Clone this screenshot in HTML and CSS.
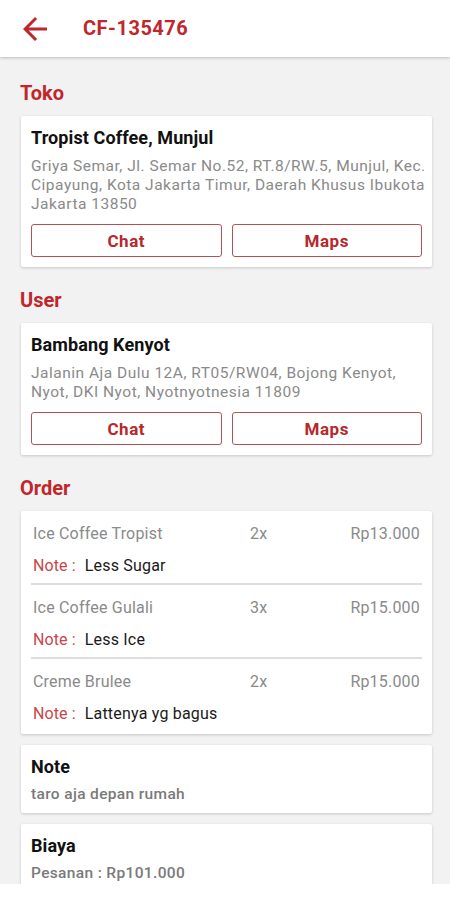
FILE: index.html
```html
<!DOCTYPE html>
<html lang="id">
<head>
<meta charset="utf-8">
<title>CF-135476</title>
<link rel="stylesheet" href="styles.css">
</head>
<body>
<header class="appbar">
  <button class="back" aria-label="Kembali">
    <svg viewBox="0 0 24 24" width="36" height="36"><path d="M20 11H7.83l5.59-5.59L12 4l-8 8 8 8 1.41-1.41L7.83 13H20v-2z" fill="currentColor"/></svg>
  </button>
  <h1 class="title">CF-135476</h1>
</header>

<main class="content">
  <h2 class="section-title">Toko</h2>
  <section class="card party">
    <h3 class="card-title">Tropist Coffee, Munjul</h3>
    <p class="address">Griya Semar, Jl. Semar No.52, RT.8/RW.5, Munjul, Kec. Cipayung, Kota Jakarta Timur, Daerah Khusus Ibukota Jakarta 13850</p>
    <div class="actions">
      <button class="btn">Chat</button>
      <button class="btn">Maps</button>
    </div>
  </section>

  <h2 class="section-title">User</h2>
  <section class="card party">
    <h3 class="card-title">Bambang Kenyot</h3>
    <p class="address">Jalanin Aja Dulu 12A, RT05/RW04, Bojong Kenyot, Nyot, DKI Nyot, Nyotnyotnesia 11809</p>
    <div class="actions">
      <button class="btn">Chat</button>
      <button class="btn">Maps</button>
    </div>
  </section>

  <h2 class="section-title">Order</h2>
  <section class="card order">
    <div class="order-row">
      <div class="item"><span class="name">Ice Coffee Tropist</span><span class="qty">2x</span><span class="price">Rp13.000</span></div>
      <div class="note"><span class="note-label">Note :</span><span class="note-value">Less Sugar</span></div>
    </div>
    <div class="order-row">
      <div class="item"><span class="name">Ice Coffee Gulali</span><span class="qty">3x</span><span class="price">Rp15.000</span></div>
      <div class="note"><span class="note-label">Note :</span><span class="note-value">Less Ice</span></div>
    </div>
    <div class="order-row">
      <div class="item"><span class="name">Creme Brulee</span><span class="qty">2x</span><span class="price">Rp15.000</span></div>
      <div class="note"><span class="note-label">Note :</span><span class="note-value">Lattenya yg bagus</span></div>
    </div>
  </section>

  <section class="card info">
    <h3 class="card-title">Note</h3>
    <p class="info-text">taro aja depan rumah</p>
  </section>

  <section class="card info">
    <h3 class="card-title">Biaya</h3>
    <p class="info-text">Pesanan : Rp101.000</p>
  </section>
</main>
<div class="bottom-bar"></div>
</body>
</html>
```

FILE: styles.css
```css
* { box-sizing: border-box; }
html, body { margin: 0; padding: 0; }
body {
  background: #f2f2f2;
  font-family: Roboto, "Noto Sans", "Liberation Sans", sans-serif;
  color: #222;
  width: 450px;
  min-height: 900px;
}
.appbar {
  height: 57px;
  background: #fff;
  display: flex;
  align-items: center;
  box-shadow: 0 1px 3px rgba(0,0,0,0.22);
  position: relative;
  z-index: 1;
}
.back {
  border: 0;
  background: none;
  padding: 0;
  margin: 0 0 0 17px;
  width: 36px;
  height: 36px;
  color: #c0272d;
  display: flex;
}
.title {
  margin: 0 0 0 30px;
  font-size: 20px;
  letter-spacing: 0.5px;
  font-weight: 700;
  color: #c0272d;
  line-height: 57px;
}
.content {
  padding: 3px 18px 40px 21px;
}
.section-title {
  margin: 21px 0 11px -1px;
  font-size: 20px;
  line-height: 24px;
  font-weight: 700;
  color: #c0272d;
}
.card {
  background: #fff;
  border-radius: 2px;
  box-shadow: 0 1px 3px rgba(0,0,0,0.18);
}
.party { padding: 12px 10px 10px; }
.card-title {
  margin: 0;
  font-size: 18px;
  letter-spacing: 0.1px;
  line-height: 20px;
  font-weight: 700;
  color: #111;
}
.address {
  margin: 9px -4px 0 0;
  font-size: 15.5px;
  letter-spacing: 0.5px;
  line-height: 19px;
  color: #8a8a8a;
}
.actions {
  margin-top: 10px;
  display: grid;
  grid-template-columns: 1fr 1fr;
  gap: 10px;
}
.btn {
  height: 33px;
  background: #fff;
  border: 1px solid #b35252;
  border-radius: 3px;
  font-family: inherit;
  font-size: 17px;
  letter-spacing: 0.5px;
  font-weight: 700;
  color: #b8272c;
  padding: 0;
}
.order { padding: 0 0 3px; margin-bottom: 11px; }
.order-row {
  margin: 0 10px;
  padding: 13px 2px 7px;
}
.order-row + .order-row {
  border-top: 2px solid #dedede;
}
.item {
  display: grid;
  grid-template-columns: 217px auto 1fr;
  font-size: 16px;
  letter-spacing: 0.2px;
  line-height: 20px;
  color: #8a8a8a;
}
.price { text-align: right; }
.note {
  margin-top: 12px;
  font-size: 16px;
  line-height: 20px;
  display: flex;
  gap: 9px;
}
.note-label { color: #c6474a; letter-spacing: 0.1px; }
.note-value { color: #1a1a1a; letter-spacing: 0.2px; }
.info {
  padding: 12px 10px 10px;
  margin-bottom: 11px;
}
.info-text {
  margin: 8px 0 0;
  font-size: 15.5px;
  letter-spacing: 0.35px;
  line-height: 18px;
  font-weight: 500;
  color: #7a7a7a;
}
.bottom-bar {
  position: fixed;
  left: 0;
  right: 0;
  bottom: 0;
  height: 16px;
  background: #fff;
  z-index: 2;
}
```
